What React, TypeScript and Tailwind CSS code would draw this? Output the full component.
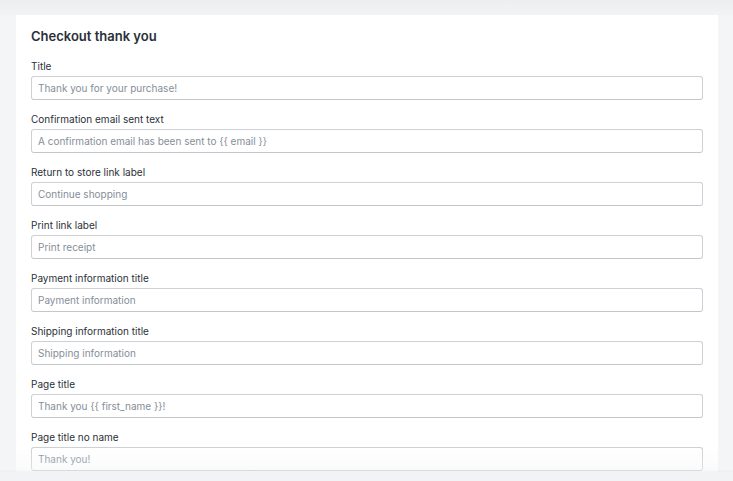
const fields = [
  { label: "Title", placeholder: "Thank you for your purchase!" },
  { label: "Confirmation email sent text", placeholder: "A confirmation email has been sent to {{ email }}" },
  { label: "Return to store link label", placeholder: "Continue shopping" },
  { label: "Print link label", placeholder: "Print receipt" },
  { label: "Payment information title", placeholder: "Payment information" },
  { label: "Shipping information title", placeholder: "Shipping information" },
  { label: "Page title", placeholder: "Thank you {{ first_name }}!" },
  { label: "Page title no name", placeholder: "Thank you!" },
];

export default function App() {
  return (
    <div
      className="relative h-[481px] w-full overflow-hidden bg-[#f4f5f7] pl-4 pr-[15px] pt-[15px]"
      style={{ fontFamily: "Inter, 'Noto Sans', sans-serif" }}
    >
      {/* top shade */}
      <div className="pointer-events-none absolute inset-x-0 top-0 h-[15px] bg-gradient-to-b from-[#eceef0] to-[#f2f3f5]" />

      <div className="relative bg-white px-[15px] pt-[11px] pb-6">
        <h2 className="text-[13px] font-semibold leading-5 text-[#2a3038]">Checkout thank you</h2>

        <div className="mt-3 flex flex-col gap-[11px]">
          {fields.map((f) => (
            <div key={f.label}>
              <label className="block text-[10px] leading-4 text-[#2a3038]">{f.label}</label>
              <input
                readOnly
                placeholder={f.placeholder}
                className="mt-[2px] block h-6 w-full rounded-[3px] border border-[#cdd0d4] border-b-[#c3c7cc] bg-white px-[6px] text-[10px] text-[#212b36] outline-none placeholder:text-[#858e98]"
              />
            </div>
          ))}
        </div>
      </div>

      {/* bottom bar with fade */}
      <div className="pointer-events-none absolute inset-x-0 bottom-[9px] h-6 bg-gradient-to-b from-white/0 to-[#f4f5f7]/50" />
      <div className="absolute inset-x-0 bottom-0 h-[9px] bg-[#f2f3f5] shadow-[0_-1px_2px_rgba(0,0,0,0.04)]" />
    </div>
  );
}
